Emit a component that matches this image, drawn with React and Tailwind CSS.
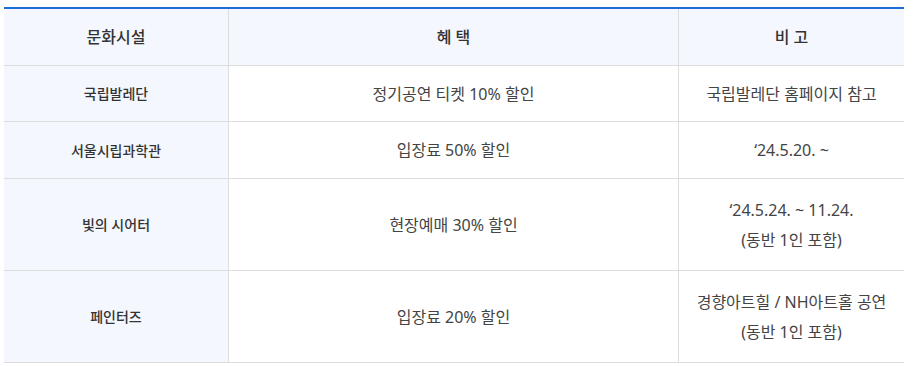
import React from 'react';

const rows = [
  { place: '국립발레단', benefit: '정기공연 티켓 10% 할인', note: ['국립발레단 홈페이지 참고'], h: 'h-[56px]' },
  { place: '서울시립과학관', benefit: '입장료 50% 할인', note: ['‘24.5.20. ~'], h: 'h-[57px]' },
  { place: '빛의 시어터', benefit: '현장예매 30% 할인', note: ['‘24.5.24. ~ 11.24.', '(동반 1인 포함)'], h: 'h-[92px]' },
  { place: '페인터즈', benefit: '입장료 20% 할인', note: ['경향아트힐 / NH아트홀 공연', '(동반 1인 포함)'], h: 'h-[92px]' },
];

const font = { fontFamily: '"Noto Sans", "Noto Sans CJK KR", sans-serif' };

export default function App() {
  return (
    <div className="bg-white w-[913px] h-[366px] pt-[7px] pl-[4px]" style={font}>
      <div className="w-[900px] border-t-2 border-[#1d6dd8] grid grid-cols-[225px_450px_225px]">
        {/* header */}
        <div className="h-[57px] bg-[#f4f7fd] border-b border-r border-[#dddddd] flex items-center justify-center text-[16px] font-medium text-[#333]">
          문화시설
        </div>
        <div className="h-[57px] bg-[#f4f7fd] border-b border-r border-[#dddddd] flex items-center justify-center text-[16px] font-medium text-[#333]">
          혜 택
        </div>
        <div className="h-[57px] bg-[#f4f7fd] border-b border-[#dddddd] flex items-center justify-center text-[16px] font-medium text-[#333]">
          비 고
        </div>

        {rows.map((r) => (
          <React.Fragment key={r.place}>
            <div className={`${r.h} bg-[#f4f7fd] border-b border-r border-[#dddddd] flex items-center justify-center text-[14px] font-medium text-[#333]`}>
              {r.place}
            </div>
            <div className={`${r.h} border-b border-r border-[#dddddd] flex items-center justify-center text-[16px] text-[#444]`}>
              {r.benefit}
            </div>
            <div className={`${r.h} border-b border-[#dddddd] flex flex-col items-center justify-center text-[16px] leading-[30px] text-[#444]`}>
              {r.note.map((n) => (
                <span key={n}>{n}</span>
              ))}
            </div>
          </React.Fragment>
        ))}
      </div>
    </div>
  );
}
